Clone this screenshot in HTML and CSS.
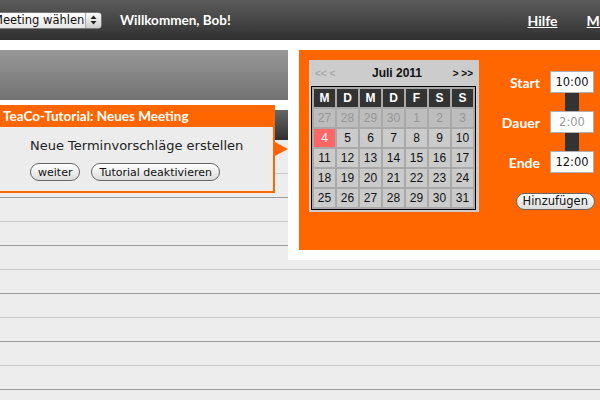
FILE: index.html
```html
<!DOCTYPE html>
<html lang="de">
<head>
<meta charset="utf-8">
<title>TeaCo</title>
<link rel="stylesheet" href="styles.css">
</head>
<body>
<header class="topbar">
  <div class="select">
    <span class="select-text">Meeting wählen</span>
    <span class="select-btn">
      <svg width="7" height="10" viewBox="0 0 7 10"><path d="M0.5 4 L3.5 0.5 L6.5 4 Z M0.5 6 L3.5 9.5 L6.5 6 Z" fill="#222"/></svg>
    </span>
  </div>
  <span class="welcome">Willkommen, Bob!</span>
  <nav class="nav">
    <a class="nav-link" href="#">Hilfe</a>
    <a class="nav-link" href="#">Mein Konto</a>
  </nav>
</header>

<main class="main">
  <div class="grayhead"></div>
  <div class="darkbar"></div>
  <div class="rows">
    <div class="row light"></div>
    <div class="row dark"></div>
    <div class="row light"></div>
    <div class="row dark"></div>
    <div class="row light"></div>
    <div class="row dark"></div>
    <div class="row light"></div>
    <div class="row dark"></div>
    <div class="row light"></div>
    <div class="row dark"></div>
    <div class="row light"></div>
  </div>

  <div class="tutorial">
    <div class="tut-head">TeaCo-Tutorial: Neues Meeting</div>
    <div class="tut-body">
      <p class="tut-text">Neue Terminvorschläge erstellen</p>
      <div class="tut-buttons">
        <button class="pill">weiter</button>
        <button class="pill">Tutorial deaktivieren</button>
      </div>
    </div>
    <span class="tut-arrow"></span>
  </div>

  <div class="panel">
    <div class="panel-inner">
      <div class="cal">
        <div class="cal-title">
          <span class="cal-prev">&lt;&lt; &lt;</span>
          <span class="cal-month">Juli 2011</span>
          <span class="cal-next">&gt; &gt;&gt;</span>
        </div>
        <div class="cal-grid">
          <span class="cal-h">M</span><span class="cal-h">D</span><span class="cal-h">M</span><span class="cal-h">D</span><span class="cal-h">F</span><span class="cal-h">S</span><span class="cal-h">S</span>
          <span class="cal-d other">27</span><span class="cal-d other">28</span><span class="cal-d other">29</span><span class="cal-d other">30</span><span class="cal-d other">1</span><span class="cal-d other">2</span><span class="cal-d other">3</span>
          <span class="cal-d today">4</span><span class="cal-d">5</span><span class="cal-d">6</span><span class="cal-d">7</span><span class="cal-d">8</span><span class="cal-d">9</span><span class="cal-d">10</span>
          <span class="cal-d">11</span><span class="cal-d">12</span><span class="cal-d">13</span><span class="cal-d">14</span><span class="cal-d">15</span><span class="cal-d">16</span><span class="cal-d">17</span>
          <span class="cal-d">18</span><span class="cal-d">19</span><span class="cal-d">20</span><span class="cal-d">21</span><span class="cal-d">22</span><span class="cal-d">23</span><span class="cal-d">24</span>
          <span class="cal-d">25</span><span class="cal-d">26</span><span class="cal-d">27</span><span class="cal-d">28</span><span class="cal-d">29</span><span class="cal-d">30</span><span class="cal-d">31</span>
        </div>
      </div>
      <div class="times">
        <div class="trow"><span class="tlabel">Start</span><span class="tbox">10:00</span></div>
        <div class="tlink"></div>
        <div class="trow"><span class="tlabel">Dauer</span><span class="tbox muted">2:00</span></div>
        <div class="tlink"></div>
        <div class="trow"><span class="tlabel">Ende</span><span class="tbox">12:00</span></div>
        <div class="tadd"><button class="pill add">Hinzufügen</button></div>
      </div>
    </div>
  </div>
</main>
</body>
</html>
```

FILE: styles.css
```css
html, body {
  margin: 0;
  padding: 0;
}
body {
  width: 600px;
  height: 400px;
  overflow: hidden;
  background: #fff;
  font-family: "DejaVu Sans", Verdana, sans-serif;
}

/* top bar */
.topbar {
  height: 40px;
  background: linear-gradient(#5c5c5c, #303030);
  display: flex;
  align-items: center;
  position: relative;
}
.select {
  margin-left: -10px;
  width: 112px;
  height: 17px;
  box-sizing: border-box;
  border: 1px solid #7a7a7a;
  border-radius: 4px;
  background: linear-gradient(#ffffff, #e6e6e6);
  display: flex;
  align-items: center;
  justify-content: space-between;
  overflow: hidden;
}
.select-text {
  font-family: "DejaVu Sans", sans-serif;
  font-size: 11.5px;
  color: #111;
  padding-left: 2px;
  white-space: nowrap;
}
.select-btn {
  width: 15px;
  height: 15px;
  border-left: 1px solid #aaa;
  background: linear-gradient(#fafafa, #cfcfcf);
  display: flex;
  align-items: center;
  justify-content: center;
}
.welcome {
  margin-left: 18px;
  color: #fff;
  font-family: "Lato", sans-serif;
  font-weight: bold;
  font-size: 13.5px;
}
.nav {
  margin-left: auto;
  display: flex;
  gap: 29px;
  margin-right: -60px;
}
.nav-link {
  color: #fff;
  font-family: "Lato", sans-serif;
  font-weight: bold;
  font-size: 14px;
  white-space: nowrap;
}

/* main area */
.main {
  position: relative;
  padding-top: 10px;
  height: 350px;
}
.grayhead {
  height: 50px;
  background: linear-gradient(#989898, #727272);
  margin-bottom: 10px;
}
.darkbar {
  height: 30px;
  background: linear-gradient(#676767, #303030);
}
.rows {
  background: #ededed;
  padding-top: 10px;
  height: 260px;
  overflow: hidden;
}
.row {
  height: 23px;
  border-bottom: 1px solid #999;
}
.row.light {
  border-bottom-color: #cacaca;
}

/* tutorial tooltip */
.tutorial {
  position: absolute;
  left: -10px;
  top: 65px;
  width: 281px;
  border: 2px solid #ff6600;
  border-top: 0;
  background: #ececec;
}
.tut-head {
  background: #ff6600;
  height: 22px;
  line-height: 22px;
  color: #fff;
  font-family: "Lato", sans-serif;
  font-weight: bold;
  font-size: 13.5px;
  padding-left: 11px;
}
.tut-body {
  padding: 9px 0 10px 38px;
}
.tut-text {
  margin: 0;
  font-family: "DejaVu Sans", sans-serif;
  font-size: 13px;
  line-height: 19px;
  color: #222;
}
.tut-buttons {
  margin-top: 8px;
  display: flex;
  gap: 11px;
}
.pill {
  height: 18px;
  box-sizing: border-box;
  border: 1px solid #666;
  border-radius: 9px;
  background: linear-gradient(#ffffff, #dcdcdc);
  font-family: "DejaVu Sans", sans-serif;
  font-size: 11px;
  color: #111;
  padding: 0 7px;
  line-height: 15px;
  margin: 0;
}
.tut-arrow {
  position: absolute;
  right: -15px;
  top: 37px;
  width: 0;
  height: 0;
  border-left: 13px solid #ff6600;
  border-top: 7px solid transparent;
  border-bottom: 7px solid transparent;
}

/* calendar panel */
.panel {
  position: absolute;
  left: 288px;
  top: 0;
  width: 312px;
  height: 220px;
  box-sizing: border-box;
  background: #fff;
  padding: 10px 0 10px 11px;
}
.panel-inner {
  background: #ff6600;
  height: 200px;
  display: flex;
  padding: 10px 0 0 10px;
  box-sizing: border-box;
}
.cal {
  width: 170px;
  height: 152px;
  background: #cccccc;
  box-sizing: border-box;
  padding: 0 2px;
}
.cal-title {
  height: 26px;
  display: flex;
  align-items: center;
  justify-content: space-between;
  padding: 0 4px 0 4px;
  font-family: "Liberation Sans", Arial, sans-serif;
  font-weight: bold;
}
.cal-prev {
  color: #aaa;
  font-size: 10px;
}
.cal-next {
  color: #111;
  font-size: 10px;
}
.cal-month {
  font-size: 12px;
  color: #111;
  margin-left: 6px;
}
.cal-grid {
  width: 165px;
  box-sizing: border-box;
  border: 1px solid #000;
  padding: 2px;
  background: #a9a9a9;
  display: grid;
  grid-template-columns: repeat(7, 21px);
  grid-template-rows: repeat(6, 18px);
  gap: 2px;
  font-family: "Liberation Sans", Arial, sans-serif;
  font-size: 12px;
}
.cal-h, .cal-d {
  display: flex;
  align-items: center;
  justify-content: center;
}
.cal-h {
  background: #333;
  color: #fff;
  font-weight: bold;
}
.cal-d {
  background: #cbcbcb;
  color: #111;
}
.cal-d.other {
  background: #bdbdbd;
  color: #959595;
}
.cal-d.today {
  background: #ff6666;
  color: #fff;
}

/* times */
.times {
  margin-left: auto;
  width: 100px;
  padding-top: 11px;
  padding-right: 6px;
  display: flex;
  flex-direction: column;
}
.trow {
  display: flex;
  align-items: center;
  justify-content: flex-end;
  gap: 10px;
}
.tlabel {
  color: #fff;
  font-family: "Lato", sans-serif;
  font-weight: bold;
  font-size: 14px;
}
.tbox {
  width: 44px;
  height: 22px;
  box-sizing: border-box;
  background: #fff;
  border: 1px solid #b0b0b0;
  font-family: "DejaVu Sans", sans-serif;
  font-size: 11.5px;
  color: #111;
  display: flex;
  align-items: center;
  justify-content: center;
}
.tbox.muted {
  color: #999;
}
.tlink {
  width: 14px;
  height: 18px;
  background: #333;
  align-self: flex-end;
  margin-right: 15px;
}
.tadd {
  margin-top: 20px;
  display: flex;
  justify-content: flex-end;
  margin-right: -1px;
}
.pill.add {
  height: 17px;
  padding: 0 6px;
  font-size: 11.5px;
}
```
